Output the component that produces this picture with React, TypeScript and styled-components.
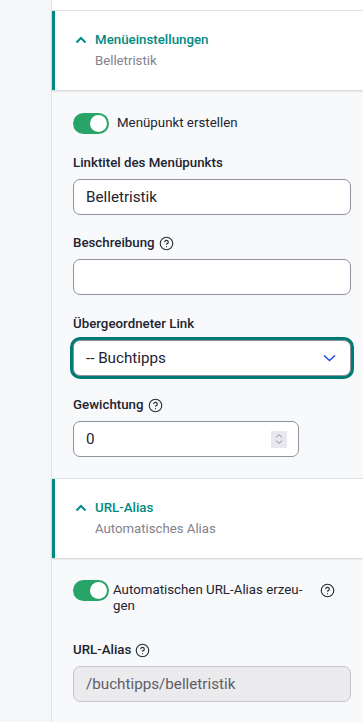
import React, { FC } from "react";
import styled, { createGlobalStyle } from "styled-components";

const Colors = {
  Teal: "#008a83",
  TealDark: "#007b74",
  Green: "#28a468",
  Text: "#222330",
  Muted: "#82828c",
  Border: "#8e929c",
  Line: "#e2e4e7",
  PanelBg: "#f7f9fa",
  GutterBg: "#f4f6f8",
  White: "#ffffff",
  Blue: "#1f4fd8",
};

const GlobalStyle = createGlobalStyle`
  html, body {
    margin: 0;
    padding: 0;
    background: ${Colors.GutterBg};
  }
  body {
    font-family: Roboto, "Noto Sans", sans-serif;
    color: ${Colors.Text};
  }
`;

const Page = styled.div`
  display: flex;
  min-height: 722px;
  overflow: hidden;
`;

const Gutter = styled.div`
  width: 51px;
  flex: 0 0 51px;
  border-right: 1px solid ${Colors.Line};
  background: ${Colors.GutterBg};
`;

const Sidebar = styled.div`
  flex: 1;
  min-width: 0;
  background: ${Colors.PanelBg};
`;

const TopStrip = styled.div`
  height: 10px;
  background: ${Colors.White};
  border-bottom: 1px solid ${Colors.Line};
`;

const Summary = styled.div`
  position: relative;
  height: 79px;
  box-sizing: border-box;
  padding: 20px 12px 0 20px;
  background: ${Colors.White};
  border-left: 3px solid ${Colors.Teal};
  box-shadow: 0 1px 2px rgba(0, 0, 0, 0.18);
  z-index: 1;
`;

const SummaryTitle = styled.div`
  display: flex;
  align-items: center;
  gap: 8px;
  font-size: 13.3px;
  line-height: 18px;
  font-weight: 500;
  color: ${Colors.Teal};
`;

const SummarySub = styled.div`
  margin: 3px 0 0 20px;
  font-size: 13.2px;
  line-height: 18px;
  color: ${Colors.Muted};
`;

const Body = styled.div<{ pt: number; pb: number }>`
  padding: ${({ pt }) => pt}px 12px ${({ pb }) => pb}px 21px;
  background: ${Colors.PanelBg};
  border-bottom: 1px solid ${Colors.Line};
`;

const ToggleRow = styled.div<{ mb: number; gap: number }>`
  display: flex;
  align-items: flex-start;
  gap: ${({ gap }) => gap}px;
  margin-bottom: ${({ mb }) => mb}px;
`;

const Switch = styled.span`
  position: relative;
  flex: 0 0 36px;
  width: 36px;
  height: 21px;
  border-radius: 11px;
  background: ${Colors.Green};

  &::after {
    content: "";
    position: absolute;
    top: 2px;
    right: 2px;
    width: 17px;
    height: 17px;
    border-radius: 50%;
    background: ${Colors.White};
  }
`;

const ToggleLabel = styled.span<{ width?: number }>`
  font-size: 13.3px;
  line-height: 16px;
  padding-top: 2px;
  color: ${Colors.Text};
  width: ${({ width }) => (width ? `${width}px` : "auto")};
  hyphens: manual;
`;

const Field = styled.div<{ mb: number }>`
  margin-bottom: ${({ mb }) => mb}px;
`;

const Label = styled.div`
  display: flex;
  align-items: center;
  gap: 4px;
  height: 18px;
  font-size: 13.3px;
  line-height: 18px;
  font-weight: 500;
  margin-bottom: 7px;
`;

const Input = styled.div<{ width?: number; disabled?: boolean }>`
  display: flex;
  align-items: center;
  justify-content: space-between;
  box-sizing: border-box;
  height: 36px;
  width: ${({ width }) => (width ? `${width}px` : "100%")};
  padding: 0 12px;
  border: 1px solid ${Colors.Border};
  border-radius: 7px;
  background: ${({ disabled }) => (disabled ? "#ebebed" : Colors.White)};
  border-color: ${({ disabled }) => (disabled ? "#c6c7cc" : Colors.Border)};
  color: ${({ disabled }) => (disabled ? "#5c5d68" : Colors.Text)};
  font-size: 15.2px;
`;

const Select = styled(Input)`
  box-shadow: 0 0 0 3px ${Colors.TealDark};
  padding-right: 14px;
`;

const Spinner = styled.span`
  display: flex;
  align-items: center;
  justify-content: center;
  width: 16px;
  height: 17px;
  margin-right: -1px;
  background: #e8e8ee;
`;

const Help: FC<{ size?: number }> = ({ size = 15 }) => (
  <svg
    width={size}
    height={size}
    viewBox="0 0 24 24"
    fill="none"
    stroke="#2b2b33"
    strokeWidth={1.8}
    strokeLinecap="round"
    strokeLinejoin="round"
  >
    <circle cx="12" cy="12" r="10" />
    <path d="M9.09 9a3 3 0 0 1 5.83 1c0 2-3 3-3 3" />
    <path d="M12 17h.01" />
  </svg>
);

const ChevronUp = () => (
  <svg width="12" height="8" viewBox="0 0 12 8" fill="none">
    <path d="M1.5 6.5 6 2l4.5 4.5" stroke={Colors.Teal} strokeWidth="2" />
  </svg>
);

const ChevronDown = () => (
  <svg width="13" height="8" viewBox="0 0 13 8" fill="none">
    <path d="M1 1.5 6.5 6.5 12 1.5" stroke={Colors.Blue} strokeWidth="1.6" />
  </svg>
);

const SpinIcon = () => (
  <svg width="8" height="12" viewBox="0 0 8 12" fill="none">
    <path d="M1 4.5 4 1.5 7 4.5M1 7.5 4 10.5 7 7.5" stroke="#8a8a96" strokeWidth="1" />
  </svg>
);

const HelpSlot = styled.span`
  display: flex;
  margin-left: auto;
  margin-right: 16px;
  padding-top: 3px;
`;

export default function App() {
  return (
    <Page>
      <GlobalStyle />
      <Gutter />
      <Sidebar>
        <TopStrip />
        <Summary>
          <SummaryTitle>
            <ChevronUp />
            Menüeinstellungen
          </SummaryTitle>
          <SummarySub>Belletristik</SummarySub>
        </Summary>
        <Body pt={23} pb={21}>
          <ToggleRow mb={20} gap={8}>
            <Switch />
            <ToggleLabel>Menüpunkt erstellen</ToggleLabel>
          </ToggleRow>
          <Field mb={19}>
            <Label>Linktitel des Menüpunkts</Label>
            <Input>Belletristik</Input>
          </Field>
          <Field mb={20}>
            <Label>
              Beschreibung <Help />
            </Label>
            <Input />
          </Field>
          <Field mb={20}>
            <Label>Übergeordneter Link</Label>
            <Select>
              -- Buchtipps
              <ChevronDown />
            </Select>
          </Field>
          <Field mb={0}>
            <Label>
              Gewichtung <Help />
            </Label>
            <Input width={226}>
              0
              <Spinner>
                <SpinIcon />
              </Spinner>
            </Input>
          </Field>
        </Body>
        <Summary>
          <SummaryTitle>
            <ChevronUp />
            URL-Alias
          </SummaryTitle>
          <SummarySub>Automatisches Alias</SummarySub>
        </Summary>
        <Body pt={22} pb={30}>
          <ToggleRow mb={27} gap={4}>
            <Switch />
            <ToggleLabel width={192} lang="de">
              Automatischen URL-Alias erzeu{"\u00AD"}gen
            </ToggleLabel>
            <HelpSlot>
              <Help />
            </HelpSlot>
          </ToggleRow>
          <Field mb={0}>
            <Label>
              URL-Alias <Help />
            </Label>
            <Input disabled>/buchtipps/belletristik</Input>
          </Field>
        </Body>
      </Sidebar>
    </Page>
  );
}
